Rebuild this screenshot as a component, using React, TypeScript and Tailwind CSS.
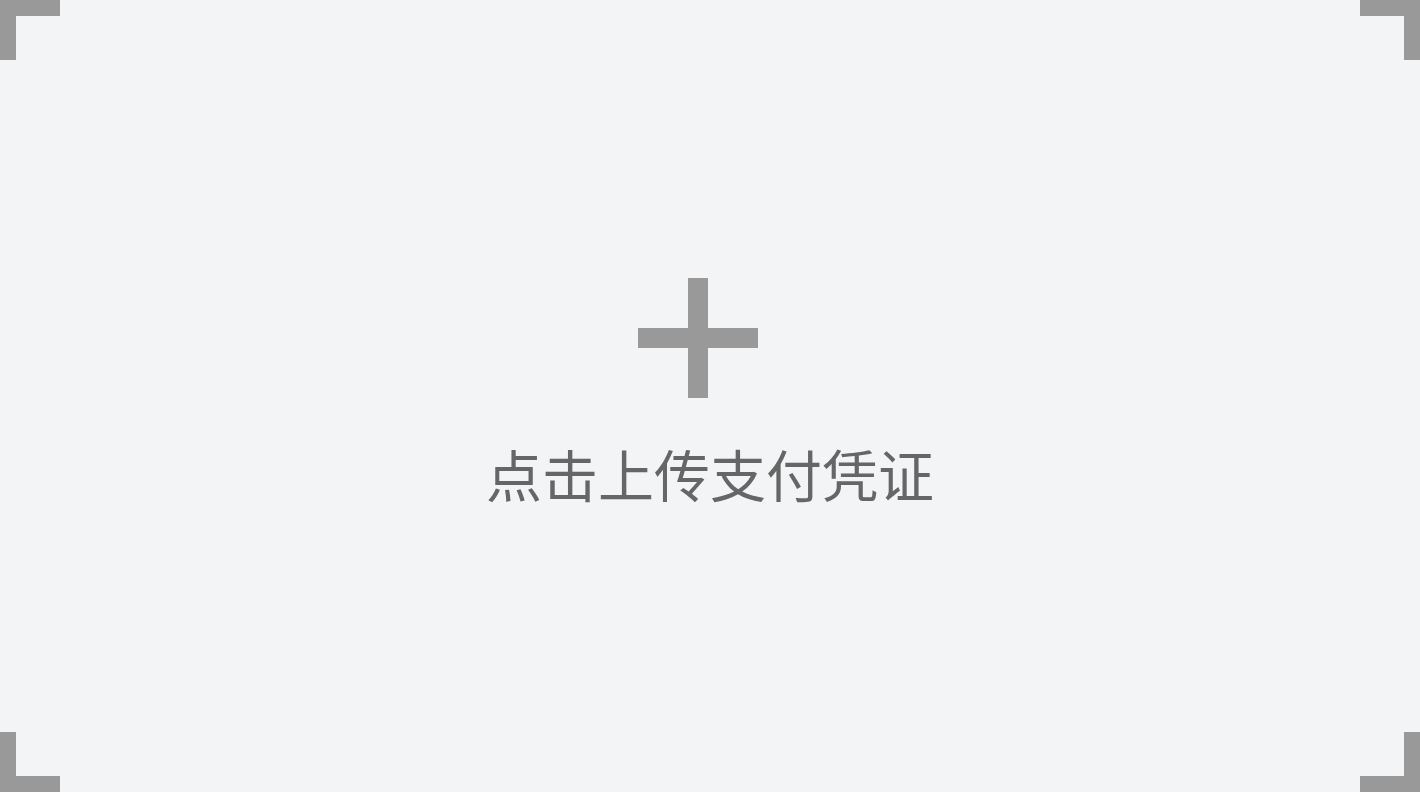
import React from "react";

const Corner = ({ pos }: { pos: string }) => {
  const map: Record<string, string> = {
    tl: "top-0 left-0 border-t-[16px] border-l-[16px]",
    tr: "top-0 right-0 border-t-[16px] border-r-[16px]",
    bl: "bottom-0 left-0 border-b-[16px] border-l-[16px]",
    br: "bottom-0 right-0 border-b-[16px] border-r-[16px]",
  };
  return <div className={`absolute w-[60px] h-[60px] border-[#999999] ${map[pos]}`} />;
};

export default function App() {
  return (
    <div className="relative w-full h-screen bg-[#f3f4f6] flex flex-col items-center justify-center cursor-pointer select-none">
      <Corner pos="tl" />
      <Corner pos="tr" />
      <Corner pos="bl" />
      <Corner pos="br" />

      <div className="relative w-[120px] h-[120px] mr-[24px] mt-[1px]">
        <div className="absolute left-[50px] top-0 w-[20px] h-[120px] bg-[#999999]" />
        <div className="absolute top-[50px] left-0 h-[20px] w-[120px] bg-[#999999]" />
      </div>

      <div
        className="mt-[33px] text-[56px] leading-[84px] text-[#666666]"
        style={{ fontFamily: '"Noto Sans CJK SC", "Noto Sans", sans-serif' }}
      >
        点击上传支付凭证
      </div>
    </div>
  );
}
